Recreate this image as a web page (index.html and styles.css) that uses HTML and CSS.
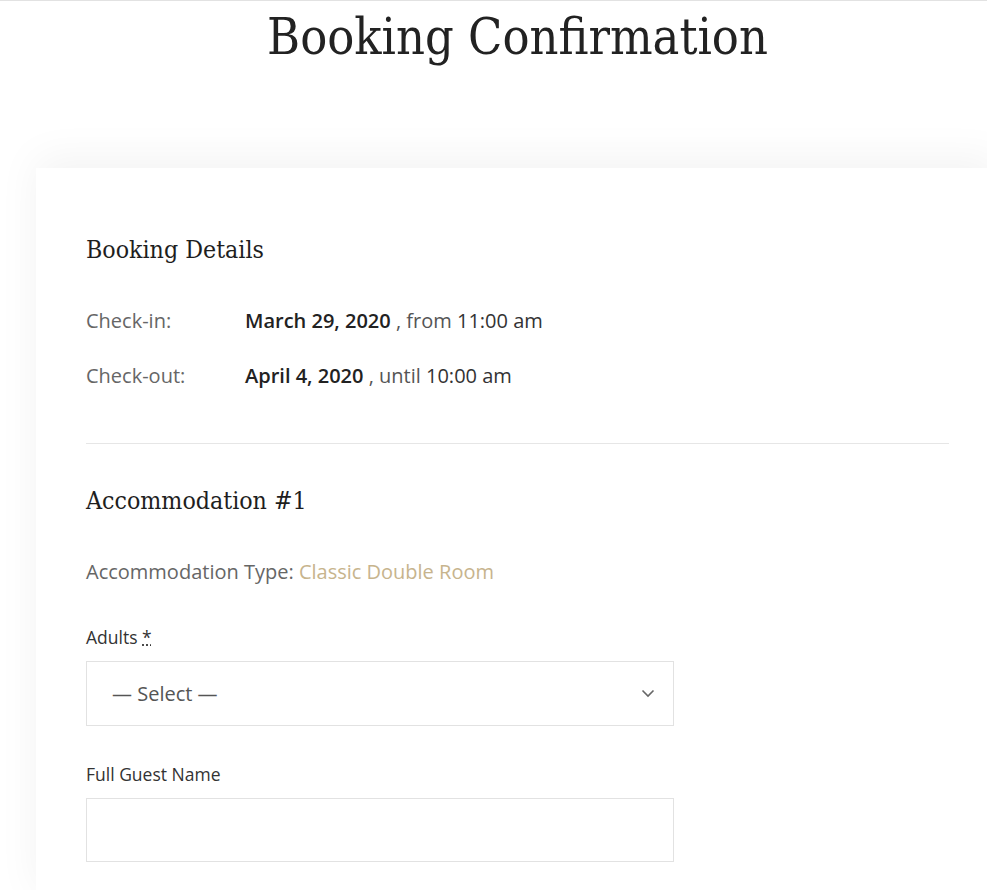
FILE: index.html
```html
<!DOCTYPE html>
<html>
<head>
  <title>Booking Confirmation</title>
  <link rel="stylesheet" href="styles.css">
</head>
<body>
  <div class="page">
    <h1 class="page-title">Booking Confirmation</h1>

    <div class="card">
      <section class="details">
        <h3 class="section-title">Booking Details</h3>
        <div class="row">
          <span class="row-label">Check-in:</span>
          <span class="row-value"><b>March 29, 2020</b> , from <span class="time">11:00 am</span></span>
        </div>
        <div class="row">
          <span class="row-label">Check-out:</span>
          <span class="row-value"><b>April 4, 2020</b> , until <span class="time">10:00 am</span></span>
        </div>
      </section>

      <section class="accommodation">
        <h3 class="section-title">Accommodation #1</h3>
        <p class="room-type">Accommodation Type: <a href="#" class="room-link">Classic Double Room</a></p>

        <label class="field-label" for="adults">Adults <abbr title="required">*</abbr></label>
        <div class="select-wrap">
          <select id="adults" class="field">
            <option>— Select —</option>
            <option>1</option>
            <option>2</option>
          </select>
          <svg class="chevron" width="14" height="9" viewBox="0 0 14 9">
            <path d="M1.5 1.5 L7 7 L12.5 1.5" fill="none" stroke="#666" stroke-width="1.6"/>
          </svg>
        </div>

        <label class="field-label" for="guest">Full Guest Name</label>
        <input type="text" id="guest" class="field">
      </section>
    </div>
  </div>
</body>
</html>
```

FILE: styles.css
```css
html { overflow-x: hidden; }
body { margin: 0; border-top: 1px solid #e2e2e2; font-family: "Open Sans", Arial, sans-serif; color: #555; background: #fff; overflow-x: hidden; }
.page { margin-left: 36px; width: 963px; }
.page-title { margin: 0; padding-top: 3px; height: 164px; text-align: center; font-family: "DejaVu Serif Condensed", "DejaVu Serif", serif; font-weight: normal; font-size: 50px; line-height: 66px; color: #222; }
.card { background: #fff; padding: 66px 50px 40px; box-shadow: 0 -10px 40px rgba(0, 0, 0, 0.05); }
.section-title { margin: 0; font-family: "DejaVu Serif Condensed", "DejaVu Serif", serif; font-weight: normal; font-size: 24.7px; line-height: 32px; color: #1e1e1e; }
.details { padding-bottom: 52px; border-bottom: 1px solid #e6e6e6; }
.details .section-title { margin-bottom: 40px; }
.row { display: flex; font-size: 20px; line-height: 30px; margin-bottom: 25px; }
.row:last-child { margin-bottom: 0; }
.row-label { width: 159px; color: #666; }
.row-value b { color: #222; font-weight: 600; }
.time { color: #333; }
.accommodation { padding-top: 41px; }
.accommodation .section-title { margin-bottom: 40px; }
.room-type { margin: 0 0 39px; font-size: 20px; line-height: 30px; color: #666; }
.room-link { color: #c7b48d; text-decoration: none; }
.field-label { display: block; font-size: 17.5px; line-height: 22px; color: #333; margin-bottom: 13px; }
.field-label abbr { text-decoration: underline dotted; color: #333; }
.select-wrap { position: relative; width: 588px; margin-bottom: 37px; }
.field { box-sizing: border-box; width: 588px; height: 65px; border: 1px solid #e2e2e2; background: #fff; padding: 0 25px; font-family: "Open Sans", Arial, sans-serif; font-size: 20px; color: #555; border-radius: 0; }
select.field { appearance: none; -webkit-appearance: none; }
input.field { height: 64px; }
.chevron { position: absolute; right: 19px; top: 28px; pointer-events: none; }
```
